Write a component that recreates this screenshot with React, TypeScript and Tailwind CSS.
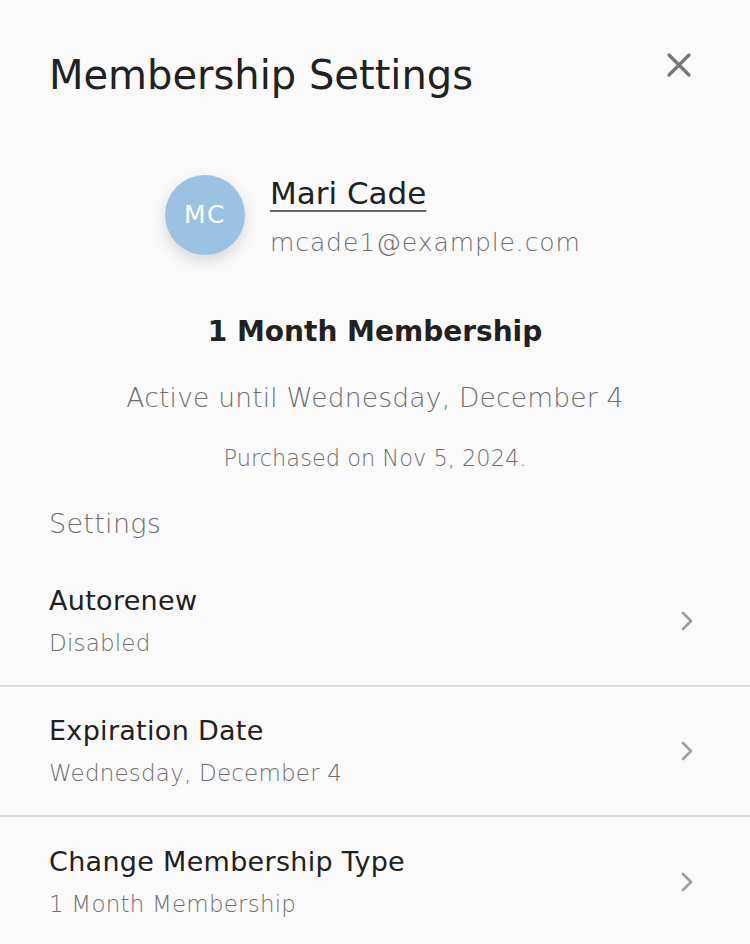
import React from "react";

function Chevron() {
  return (
    <svg width="14" height="22" viewBox="0 0 14 22" fill="none">
      <path d="M3 3 L11 11 L3 19" stroke="#9e9e9e" strokeWidth="2.6" strokeLinecap="round" strokeLinejoin="round" />
    </svg>
  );
}

function Row({ title, sub, border }: { title: string; sub: string; border?: boolean }) {
  return (
    <div className={`flex items-center justify-between pl-[49px] pr-[56px] h-[130px] ${border ? "border-b-2 border-[#dedede]" : ""}`}>
      <div className="flex flex-col pb-[1px]">
        <div className="text-[27px] leading-[34px] tracking-[0.3px] text-[#212121] font-normal">{title}</div>
        <div className="text-[23px] leading-[28px] tracking-[0.2px] mt-[11px] text-[#6f6f6f] font-light">{sub}</div>
      </div>
      <Chevron />
    </div>
  );
}

export default function App() {
  return (
    <div
      className="w-[750px] h-[944px] bg-[#fafafa] overflow-hidden flex flex-col"
      style={{ fontFamily: '"DejaVu Sans", "Liberation Sans", sans-serif' }}
    >
      <div className="flex items-start justify-between pl-[49px] pr-[58px] pt-[51px]">
        <h1 className="text-[40px] leading-[48px] font-normal text-[#212121]">Membership Settings</h1>
        <svg width="26" height="26" viewBox="0 0 26 26" className="mt-[1px]">
          <path d="M3 3 L23 23 M23 3 L3 23" stroke="#777777" strokeWidth="3.2" strokeLinecap="round" />
        </svg>
      </div>

      <div className="flex items-start pl-[165px] mt-[76px]">
        <div className="w-[80px] h-[80px] rounded-full bg-[#9bc2e2] flex items-center justify-center shadow-[0_6px_16px_rgba(0,0,0,0.14)]">
          <span className="text-white text-[25px] font-normal tracking-[1.5px]">MC</span>
        </div>
        <div className="ml-[25px] flex flex-col -mt-[1px]">
          <span className="text-[31px] leading-[38px] font-normal text-[#212121] underline decoration-[#666] decoration-2 underline-offset-[6px] self-start">Mari Cade</span>
          <span className="text-[25px] leading-[32px] tracking-[0.9px] mt-[15px] font-light text-[#6f6f6f]">mcade1@example.com</span>
        </div>
      </div>

      <div className="mt-[54px] text-center text-[28px] leading-[38px] font-semibold text-[#212121]">1 Month Membership</div>
      <div className="mt-[30px] text-center text-[26.5px] leading-[34px] tracking-[0.2px] font-light text-[#6f6f6f]">Active until Wednesday, December 4</div>
      <div className="mt-[29px] text-center text-[22.5px] leading-[28px] font-light text-[#6f6f6f]">Purchased on Nov 5, 2024.</div>

      <div className="mt-[36px] pl-[49px] text-[27px] leading-[32px] tracking-[0.3px] font-light text-[#6f6f6f]">Settings</div>

      <div className="mt-[17px] flex flex-col">
        <Row title="Autorenew" sub="Disabled" border />
        <Row title="Expiration Date" sub="Wednesday, December 4" border />
        <Row title="Change Membership Type" sub="1 Month Membership" />
      </div>
    </div>
  );
}
